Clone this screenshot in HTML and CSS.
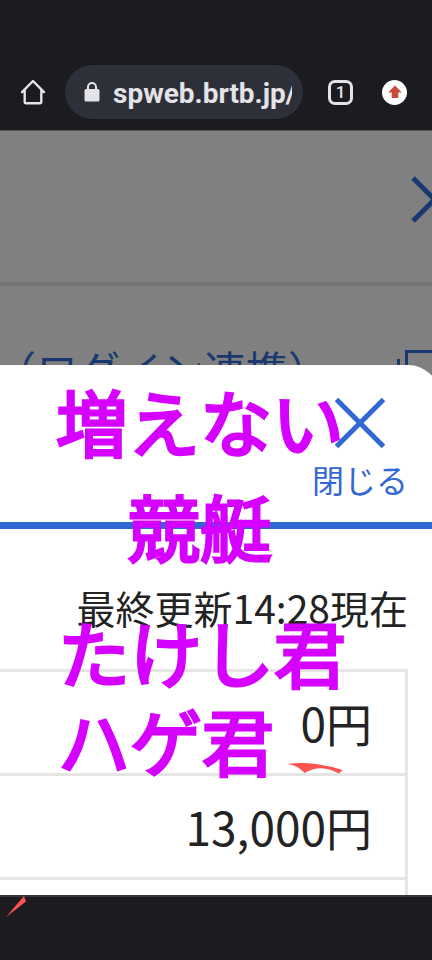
FILE: index.html
```
<!DOCTYPE html>
<html lang="ja">
<head>
<meta charset="utf-8">
<meta name="viewport" content="width=device-width, initial-scale=1">
<title>spweb.brtb.jp</title>
<link rel="stylesheet" href="styles.css">
</head>
<body>
<header class="toolbar">
  <button class="tool home" type="button" aria-label="ホーム">
    <svg width="26" height="26" viewBox="0 0 26 26" fill="none" stroke="#e4e3e8" stroke-width="2.4" stroke-linecap="round" stroke-linejoin="round"><path d="M2 13.2 13 2l11 11.2M4.700 11V23.300q0 .9.9.9h14.800q.9 0 .9-.9V11"/></svg>
  </button>
  <div class="address">
    <svg width="16" height="22" viewBox="0 0 16 22"><path d="M4 9V6a4 4 0 0 1 8 0v3" fill="none" stroke="#e4e3e8" stroke-width="2"/><rect x=".5" y="8" width="15" height="12.500" rx="1.500" fill="#e4e3e8"/></svg>
    <span class="url">spweb.brtb.jp/</span>
  </div>
  <button class="tool tabs" type="button">1</button>
  <button class="tool update" type="button" aria-label="更新">
    <svg width="14" height="14" viewBox="0 0 14 14"><path d="M7 .5 13.800 7.500H10.300V13H3.700V7.500H.2Z" fill="#c94a36"/></svg>
  </button>
</header>

<main class="page">
  <div class="page-top">
    <svg width="24" height="48" viewBox="0 0 24 48" fill="none" stroke="#1a3870" stroke-width="5"><path d="M2 3 23.500 24.500 2 46"/></svg>
  </div>
  <div class="login">
    <a class="login-link" href="#login">（ログイン連携）</a>
    <svg width="36" height="44" viewBox="0 0 36 44" fill="none" stroke="#1a3870" stroke-width="3"><path d="M10.500 32V3.500H40M2.500 11V40H32"/></svg>
  </div>

  <section class="sheet">
    <div class="sheet-head">
      <button class="close" type="button">
        <svg width="52" height="52" viewBox="0 0 52 52" stroke="#3268d2" stroke-width="5"><path d="M2.500 2.500 49.500 49.500M49.500 2.500 2.500 49.500"/></svg>
        <span>閉じる</span>
      </button>
    </div>
    <p class="updated">最終更新14:28現在</p>
    <table class="amounts">
      <tbody>
        <tr><td>0円</td></tr>
        <tr><td>13,000円</td></tr>
        <tr><td></td></tr>
      </tbody>
    </table>
  </section>
</main>

<footer class="navbar"></footer>

<div class="caption">
  <p class="centered">増えない</p>
  <p class="centered gap">競艇</p>
  <p class="name">たけし君<br>ハゲ君</p>
</div>
<svg class="mark mark-line" width="56" height="12" viewBox="0 0 56 12"><path d="M0 2Q15 0 29 2T55.500 8L52 11.500 44 8Q30 3.500 17.500 11 11 3 0 2Z" fill="#ff5350"/></svg>
<svg class="mark mark-tick" width="20" height="21" viewBox="0 0 20 21"><path d="M18 0 20 5.500 0 21Z" fill="#ff5350"/></svg>
</body>
</html>
```
FILE: styles.css
```
* { box-sizing: border-box; }

body {
  position: relative;
  display: flex;
  flex-direction: column;
  height: 100vh;
  margin: 0;
  overflow: hidden;
  background: #1c1b1f;
  color: #232323;
  font-family: "Noto Sans CJK JP", sans-serif;
}

button {
  padding: 0;
  border: 0;
  background: none;
  font: inherit;
}

p { margin: 0; }
svg { display: block; flex: none; }

.toolbar {
  display: flex;
  flex: none;
  align-items: center;
  padding: 65px 25px 11px 20px;
  border-bottom: 1px solid #55545a;
}

.tool { flex: none; }

.address {
  display: flex;
  flex: 1;
  align-items: center;
  gap: 13px;
  min-width: 0;
  height: 54px;
  margin: 0 25px 0 19px;
  padding: 0 11px 0 19px;
  border-radius: 27px;
  background: #2d3038;
}

.url {
  overflow: hidden;
  padding-top: 4px;
  color: #e4e3e8;
  font: 700 28px/36px Roboto, sans-serif;
  white-space: nowrap;
}

.tabs {
  width: 25px;
  height: 25px;
  border: 3px solid #e4e3e8;
  border-radius: 7px;
  color: #e4e3e8;
  font: 500 17px/19px Roboto, sans-serif;
}

.update {
  display: grid;
  place-items: center;
  width: 25px;
  height: 25px;
  margin-left: 29px;
  border-radius: 50%;
  background: #fff;
}

.page {
  display: flex;
  flex: 1;
  flex-direction: column;
  min-height: 0;
  overflow: hidden;
  background: #808080;
}

.page-top {
  display: flex;
  flex: none;
  justify-content: flex-end;
  height: 155px;
  padding: 44px 0 0;
  margin-right: -3px;
  border-bottom: 4px solid #737373;
}

.login {
  display: flex;
  flex: none;
  justify-content: space-between;
  height: 79px;
  padding-top: 62px;
  margin-left: -6px;
}

.login-link {
  color: #1a3870;
  font-size: 42px;
  line-height: 42px;
  text-decoration: none;
  white-space: nowrap;
}

.sheet {
  flex: 1;
  min-height: 0;
  margin-right: -8px;
  padding-right: 8px;
  overflow: hidden;
  border-radius: 0 32px 0 0;
  background: #fff;
}

.sheet-head {
  display: flex;
  justify-content: flex-end;
  height: 164px;
  margin-right: -8px;
  padding: 32px 32px 0 0;
  border-bottom: 7px solid #3268d2;
}

.close {
  display: flex;
  flex-direction: column;
  align-items: center;
  gap: 6px;
  height: 106px;
  color: #3268d2;
  font-size: 32px;
  line-height: 48px;
}

.updated {
  padding: 54px 24px 38px 0;
  font-size: 39px;
  line-height: 48px;
  text-align: right;
}

.amounts {
  width: calc(100% - 24px);
  border-collapse: collapse;
}

.amounts td {
  height: 104px;
  padding: 0 33px 2px 0;
  border: solid #e5e5e5;
  border-width: 3px 3px 3px 0;
  font-size: 46px;
  line-height: 64px;
  text-align: right;
}

.navbar {
  flex: none;
  height: 65px;
  border-top: 2px solid #38373e;
}

.caption {
  position: absolute;
  top: 376px;
  left: 54px;
  color: #d500ff;
  font-size: 72px;
  line-height: 88px;
  white-space: nowrap;
  pointer-events: none;
  -webkit-text-stroke: 3px #d500ff;
}

.centered { text-align: center; }
.gap { margin: 17px 0 38px; }
.name { padding-left: 4px; }

.mark { position: absolute; }
.mark-line { top: 762px; left: 287px; }
.mark-tick { top: 896px; left: 6px; }
```
